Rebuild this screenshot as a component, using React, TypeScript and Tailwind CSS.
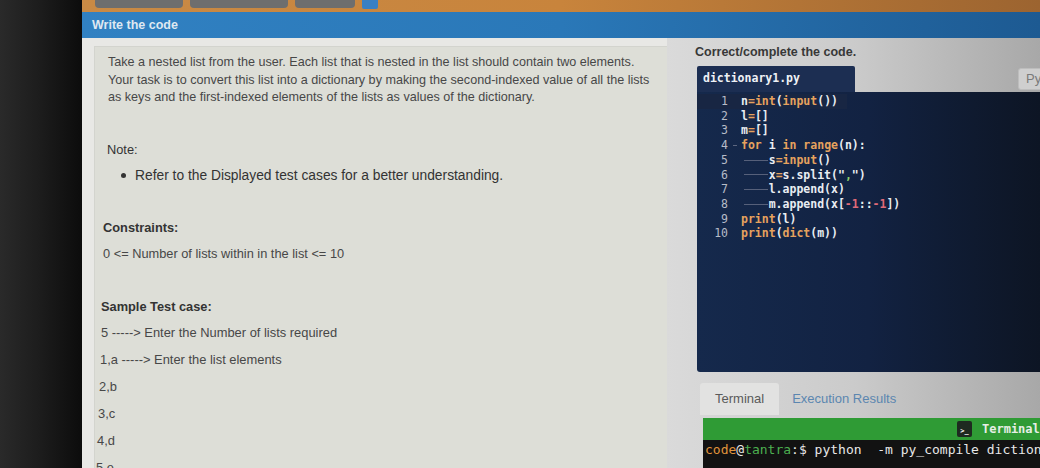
import React from 'react';

const W = 'text-[#e9edf2]';
const O = 'text-[#e6a25e]';
const R = 'text-[#e06a78]';
const G = 'text-[#8fd06a]';

type Tok = [string, string];

const codeLines: { indent: boolean; toks: Tok[] }[] = [
  { indent: false, toks: [['n', W], ['=', O], ['int', O], ['(', W], ['input', O], ['())', W]] },
  { indent: false, toks: [['l', W], ['=', O], ['[]', W]] },
  { indent: false, toks: [['m', W], ['=', O], ['[]', W]] },
  { indent: false, toks: [['for', O], [' i ', W], ['in', O], [' ', W], ['range', O], ['(n):', W]] },
  { indent: true, toks: [['s', W], ['=', O], ['input', O], ['()', W]] },
  { indent: true, toks: [['x', W], ['=', O], ['s.split(', W], ['"', W], [',', G], ['"', W], [')', W]] },
  { indent: true, toks: [['l.append(x)', W]] },
  { indent: true, toks: [['m.append(x[', W], ['-1', R], ['::', W], ['-1', R], ['])', W]] },
  { indent: false, toks: [['print', O], ['(l)', W]] },
  { indent: false, toks: [['print', O], ['(', W], ['dict', O], ['(m))', W]] },
];

const sampleLines = [
  { text: '5 -----> Enter the Number of lists required', ml: 'ml-[6px]' },
  { text: '1,a -----> Enter the list elements', ml: 'ml-[5px]' },
  { text: '2,b', ml: 'ml-[4px]' },
  { text: '3,c', ml: 'ml-[3px]' },
  { text: '4,d', ml: 'ml-[2px]' },
  { text: '5,e', ml: 'ml-[1px]' },
];

export default function App() {
  return (
    <div className="flex w-[1040px] h-[468px] overflow-hidden font-['Liberation_Sans',Arial,sans-serif]">
      {/* monitor bezel */}
      <div className="w-[82px] shrink-0 bg-linear-to-r from-[#2a2a2a] via-[#1c1c1c] to-[#0c0c0c]" />

      <div className="flex-1 flex flex-col min-w-0">
        {/* top orange bar */}
        <div className="h-[12px] shrink-0 bg-linear-to-r from-[#c98a45] via-[#c8843c] to-[#9c6430] flex items-start gap-[7px] pl-[13px]">
          <div className="w-[88px] h-[8px] rounded-b-[4px] bg-[#6e6e6e]" />
          <div className="w-[98px] h-[8px] rounded-b-[4px] bg-[#6e6e6e]" />
          <div className="w-[60px] h-[8px] rounded-b-[4px] bg-[#6e6e6e]" />
          <div className="w-[16px] h-[9px] rounded-b-[2px] bg-[#3a80c4]" />
        </div>

        {/* blue title bar */}
        <div className="h-[26px] shrink-0 bg-linear-to-r from-[#3181c2] via-[#2a78b8] to-[#1d5a92] flex items-center pl-[10px]">
          <span className="text-[12.5px] font-bold text-[#dfe8f1]">Write the code</span>
        </div>

        <div className="flex flex-1 min-h-0">
          {/* left: problem statement */}
          <div className="w-[585px] shrink-0 bg-[#e8e8e5] pl-[12px] pt-[8px]">
            <div className="h-full bg-[#dddeD7] border-t border-l border-[#d3d4ce] text-[#474747]">
              <div className="pl-[13px] pt-[7px] text-[12.6px] leading-[17.5px]">
                <p>Take a nested list from the user. Each list that is nested in the list should contain two elements.</p>
                <p>Your task is to convert this list into a dictionary by making the second-indexed value of all the lists</p>
                <p>as keys and the first-indexed elements of the lists as values of the dictionary.</p>
              </div>

              <div className="ml-[12px] mt-[34px] text-[12.8px] leading-[18px] text-[#333]">Note:</div>
              <div className="ml-[26px] mt-[8px] flex items-center gap-[9px] text-[13.8px] leading-[18px] text-[#333]">
                <span className="w-[5px] h-[5px] rounded-full bg-[#333]" />
                <span>Refer to the Displayed test cases for a better understanding.</span>
              </div>

              <div className="ml-[8px] mt-[34px] text-[12.8px] leading-[18px] font-bold text-[#333]">Constraints:</div>
              <div className="ml-[8px] mt-[8px] text-[12.8px] leading-[18px]">0 &lt;= Number of lists within in the list &lt;= 10</div>

              <div className="ml-[6px] mt-[35px] text-[12.8px] leading-[18px] font-bold text-[#333]">Sample Test case:</div>
              <div className="mt-[8px] flex flex-col gap-[9px] text-[12.9px] leading-[18px]">
                {sampleLines.map((l, i) => (
                  <div key={i} className={l.ml}>{l.text}</div>
                ))}
              </div>
            </div>
          </div>

          {/* right: editor */}
          <div className="flex-1 min-w-0 flex flex-col bg-linear-to-r from-[#dadada] via-[#cbcbcb] to-[#a8a8a8]">
            <div className="pl-[28px] pt-[6px] h-[28px] text-[12.5px] leading-[16px] font-bold text-[#383838]">
              Correct/complete the code.
            </div>

            <div className="flex items-end h-[26px] pl-[30px]">
              <div className="w-[158px] h-[26px] bg-[#1c2e52] rounded-t-[2px] flex items-center pl-[6px]">
                <span className="font-['DejaVu_Sans_Mono',monospace] text-[11.5px] font-bold text-[#eef1f5]">dictionary1.py</span>
              </div>
              <div className="flex-1" />
              <div className="self-start mt-[2px] h-[22px] w-[30px] -mr-[8px] rounded-[3px] border border-[#bdbdbd] bg-[#cfcfcf] text-[13px] text-[#7a7a7a] pl-[7px] leading-[20px]">
                Py
              </div>
            </div>

            {/* code area */}
            <div className="ml-[30px] h-[280px] shrink-0 bg-linear-to-r from-[#15294c] via-[#122242] to-[#0d1524] rounded-bl-[3px] pt-[2px] font-['DejaVu_Sans_Mono',monospace] text-[11.5px] leading-[14.7px]">
              {codeLines.map((line, i) => (
                <div key={i} className={`flex ${i === 0 ? 'bg-[#182643] w-[150px]' : ''}`}>
                  <span className="w-[31px] shrink-0 text-right text-[#b7bcc8]">{i + 1}</span>
                  <span className="w-[13px] shrink-0 flex items-center justify-center">
                    {i === 3 && <span className="w-[4px] h-px bg-[#5d6780]" />}
                  </span>
                  {line.indent && (
                    <span className="w-[27.7px] shrink-0 flex items-center pl-[3px]">
                      <span className="w-[24px] h-px bg-[#56607a]" />
                    </span>
                  )}
                  <span className="font-bold whitespace-pre">
                    {line.toks.map(([t, c], j) => (
                      <span key={j} className={c}>{t}</span>
                    ))}
                  </span>
                </div>
              ))}
            </div>

            {/* terminal tabs */}
            <div className="flex items-end h-[46px] pl-[33px] pb-[3px] text-[13px]">
              <div className="h-[32px] px-[15px] flex items-center bg-[#e2e2e1] rounded-t-[3px] text-[#5a5a5a]">Terminal</div>
              <div className="h-[32px] px-[13px] flex items-center text-[#5b86b0]">Execution Results</div>
            </div>

            <div className="ml-[36px] flex flex-col flex-1">
              <div className="h-[22px] shrink-0 bg-[#2f9b35] flex items-center justify-end gap-[10px]">
                <div className="w-[15px] h-[16px] rounded-[2px] bg-[#1e2a20] flex items-end justify-center pb-[2px]">
                  <span className="font-['DejaVu_Sans_Mono',monospace] text-[7px] leading-[8px] text-white font-bold">&gt;_</span>
                </div>
                <span className="font-['DejaVu_Sans_Mono',monospace] text-[12px] font-bold text-[#e6eee6] whitespace-nowrap w-[58px] overflow-hidden">Terminal</span>
              </div>
              <div className="flex-1 bg-[#121212] pl-[2px] pt-[1px] font-['DejaVu_Sans_Mono',monospace] text-[13px] leading-[18px] whitespace-pre overflow-hidden">
                <span className="text-[#e0953c]">code</span>
                <span className="text-[#e8e8e8]">@</span>
                <span className="text-[#4caf50]">tantra</span>
                <span className="text-[#e8e8e8]">:$ python  -m py_compile diction</span>
              </div>
            </div>
          </div>
        </div>
      </div>
    </div>
  );
}
